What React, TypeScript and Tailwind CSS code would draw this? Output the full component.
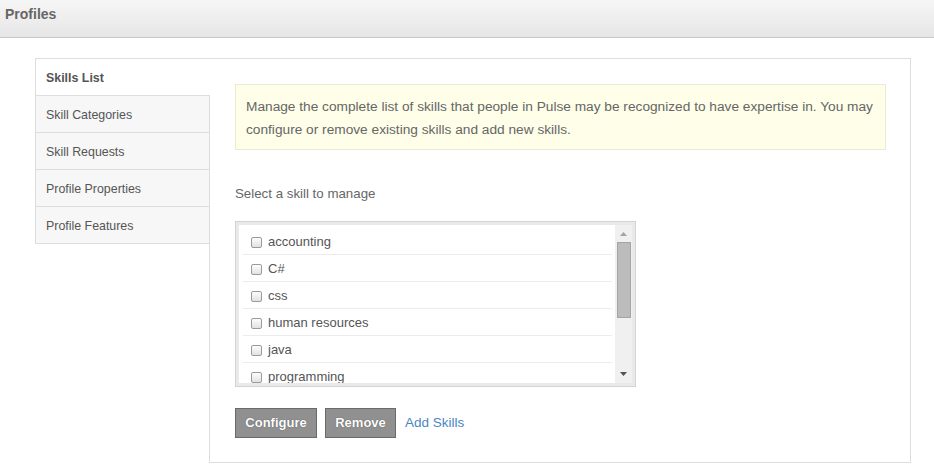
import React from 'react';

const tabs = ['Skills List', 'Skill Categories', 'Skill Requests', 'Profile Properties', 'Profile Features'];
const skills = ['accounting', 'C#', 'css', 'human resources', 'java', 'programming'];

const font = { fontFamily: '"Liberation Sans", Arial, sans-serif' };

export default function App() {
  return (
    <div className="w-[934px] h-[474px] bg-white overflow-hidden text-[#666]" style={font}>
      {/* page header */}
      <div className="h-[38px] border-b border-[#c9c9c9] bg-gradient-to-b from-[#f6f6f6] to-[#e6e6e6] flex items-center px-[5px]">
        <h1 className="text-[14px] font-bold text-[#666] -mt-[8px]">Profiles</h1>
      </div>

      <div className="pt-[20px] pl-[35px] pr-[23px]">
        <div className="flex border-t border-[#ddd] h-[405px]">
          {/* side tabs */}
          <div className="w-[175px] flex flex-col">
            {tabs.map((t, i) => (
              <div
                key={t}
                className={`h-[37px] border-l border-b border-[#ddd] flex items-center pl-[10px] pt-[2px] text-[12.4px] ${
                  i === 0 ? 'bg-white font-bold text-[#555]' : 'bg-[#f7f7f7] border-r text-[#555]'
                }`}
              >
                {t}
              </div>
            ))}
            <div className="flex-1 border-r border-[#ddd]" />
          </div>

          {/* panel */}
          <div className="flex-1 border-r border-b border-[#ddd] pt-[25px] pl-[25px] pr-[24px]">
            <div className="bg-[#fefee9] border border-[#ecebd0] px-[10px] pt-[10px] pb-[8px] text-[13.7px] leading-[23px] text-[#666]">
              Manage the complete list of skills that people in Pulse may be recognized to have expertise in. You may
              configure or remove existing skills and add new skills.
            </div>

            <p className="mt-[36px] text-[13.3px] leading-[16px]">Select a skill to manage</p>

            <div className="mt-[19px] w-[401px] h-[166px] border border-[#d4d4d4] bg-[#e9e9e9] p-[3px]">
              <div className="h-full bg-white flex">
                <div className="flex-1 overflow-hidden pt-[3px] pl-[4px]">
                  {skills.map((s) => (
                    <div key={s} className="h-[27px] border-b border-[#ececec] flex items-center pl-[8px] pt-[2px] mr-[3px]">
                      <span className="w-[11px] h-[11px] border border-[#9a9a9a] rounded-[2px] bg-gradient-to-b from-[#fdfdfd] to-[#e2e2e2] shrink-0" />
                      <span className="ml-[6px] text-[13px] text-[#555]">{s}</span>
                    </div>
                  ))}
                </div>
                {/* scrollbar */}
                <div className="w-[17px] bg-[#f0f0f0] flex flex-col items-center">
                  <svg width="9" height="17" viewBox="0 0 9 17">
                    <path d="M1 11 L4.5 7 L8 11 Z" fill="#a3a3a3" />
                  </svg>
                  <div className="w-[14px] h-[76px] bg-[#bcbcbc] border border-[#a5a5a5]" />
                  <div className="flex-1" />
                  <svg width="9" height="17" viewBox="0 0 9 17">
                    <path d="M1 6 L8 6 L4.5 10 Z" fill="#505050" />
                  </svg>
                </div>
              </div>
            </div>

            <div className="mt-[21px] flex items-center">
              <button className="h-[30px] w-[82px] bg-[#909090] border border-[#6a6a6a] text-white text-[13px] font-bold [text-shadow:0_0_1px_#444]">
                Configure
              </button>
              <button className="ml-[8px] h-[30px] w-[71px] bg-[#909090] border border-[#6a6a6a] text-white text-[13px] font-bold [text-shadow:0_0_1px_#444]">
                Remove
              </button>
              <a className="ml-[9px] text-[13.5px] text-[#4a86c2]" href="#">
                Add Skills
              </a>
            </div>
          </div>
        </div>
      </div>
    </div>
  );
}
